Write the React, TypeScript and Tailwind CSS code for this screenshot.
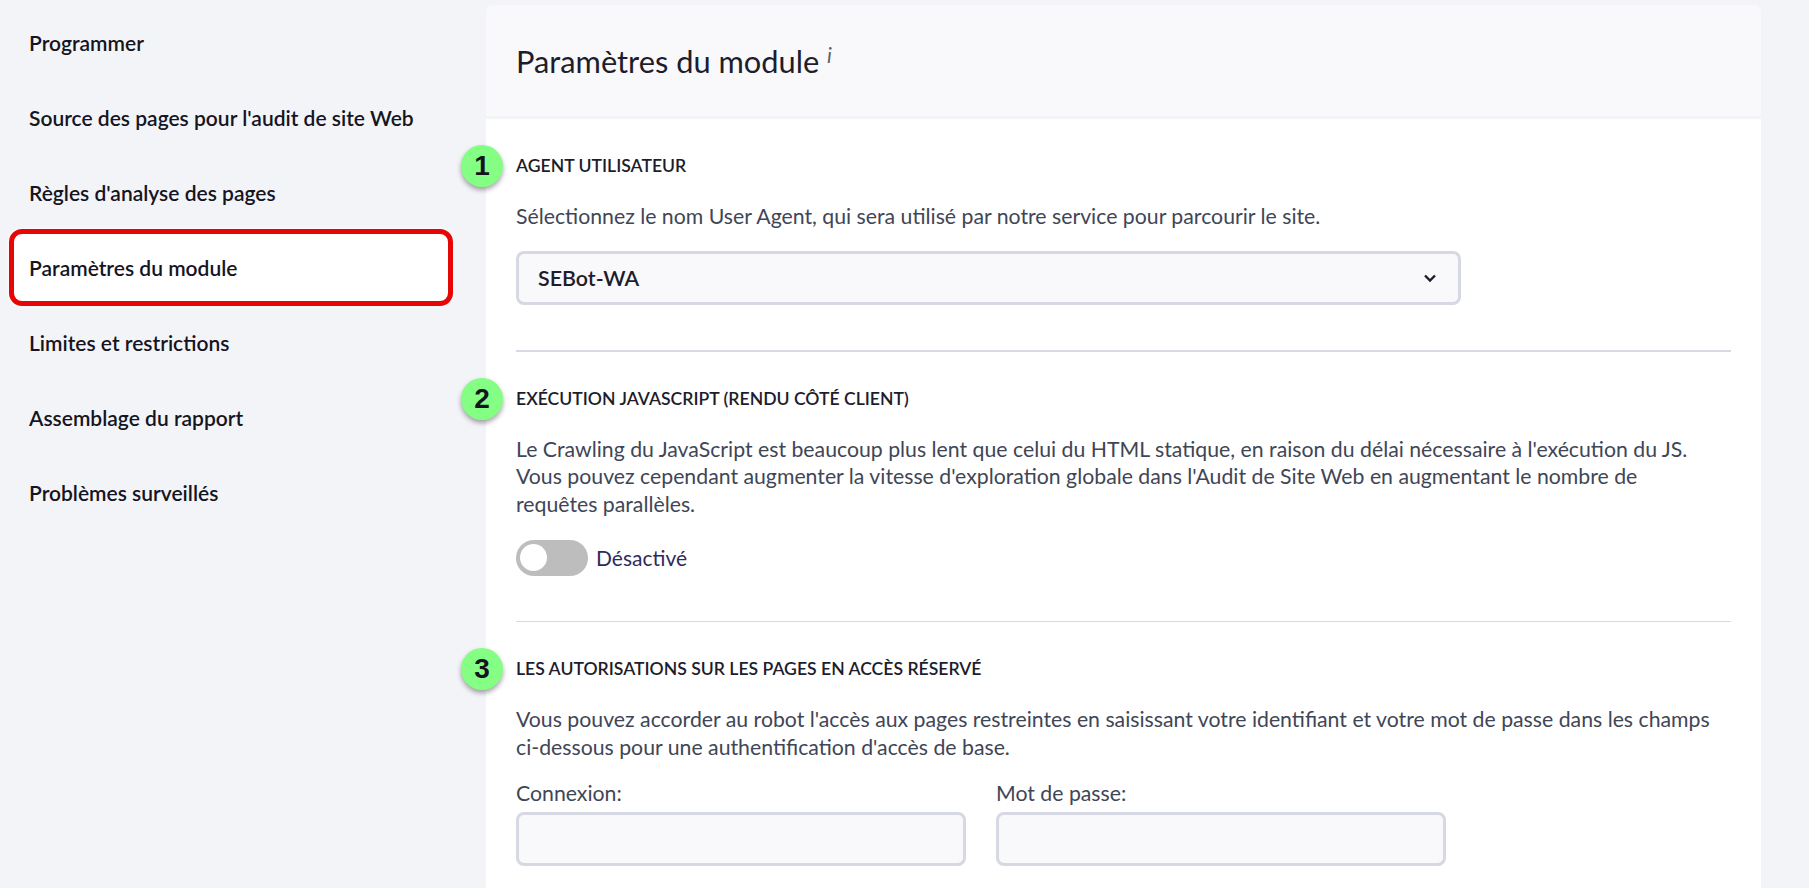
const navItems = [
  'Programmer',
  "Source des pages pour l'audit de site Web",
  "Règles d'analyse des pages",
  'Paramètres du module',
  'Limites et restrictions',
  'Assemblage du rapport',
  'Problèmes surveillés',
];

function Badge({ n }: { n: number }) {
  return (
    <div className="absolute left-[-55px] top-1/2 flex h-[42px] w-[42px] -translate-y-1/2 items-center justify-center rounded-full bg-[#84ff84] font-['Liberation_Sans',sans-serif] text-[28px] font-bold text-[#14141e] shadow-[0_3px_5px_rgba(0,0,0,0.35)]">
      {n}
    </div>
  );
}

function SectionTitle({ n, children }: { n: number; children: React.ReactNode }) {
  return (
    <h2 className="relative text-[17.6px] leading-[24px] font-semibold text-[#1d1d2b] uppercase">
      <Badge n={n} />
      {children}
    </h2>
  );
}

function Field({ label }: { label: string }) {
  return (
    <div className="w-[450px]">
      <label className="block text-[21.25px] leading-[27.7px] text-[#3f4656]">{label}</label>
      <input className="mt-[4px] h-[54px] w-full rounded-lg border-[3px] border-[#d6d8e3] bg-[#f9f9fc]" />
    </div>
  );
}

export default function App() {
  return (
    <div className="flex h-[888px] overflow-hidden bg-[#f3f4f8] font-['Lato',sans-serif] antialiased">
      <aside className="w-[486px] shrink-0 pt-[5px]">
        {navItems.map((item) =>
          item === 'Paramètres du module' ? (
            <div key={item} className="relative flex h-[75px] items-center pl-[29px] text-[21px] font-semibold text-[#15151f]">
              <div className="absolute top-[-1px] right-[33px] bottom-[-1px] left-[9px] rounded-[13px] border-[5px] border-[#e60606] bg-white shadow-[0_0_4px_#fff]" />
              <span className="relative">{item}</span>
            </div>
          ) : (
            <div key={item} className="flex h-[75px] items-center pl-[29px] text-[21px] font-semibold text-[#15151f]">
              {item}
            </div>
          ),
        )}
      </aside>

      <main className="mt-[5px] w-[1275px] shrink-0 rounded-t-lg bg-white">
        <header className="flex h-[114px] items-center rounded-t-lg border-b-[3px] border-[#f3f4f8] bg-[#f9f9fc] px-[30px] pt-[3px]">
          <h1 className="text-[30.8px] leading-none text-[#1d1d2b]">
            Paramètres du module <i className="relative -top-[10px] text-[21px] text-[#5a6070]">i</i>
          </h1>
        </header>

        <div className="px-[30px]">
          <section className="border-b-2 border-[#d8d9e5] pt-[35px] pb-[45px]">
            <SectionTitle n={1}>Agent utilisateur</SectionTitle>
            <p className="mt-[25px] text-[21.25px] leading-[27.7px] text-[#3f4656]">
              Sélectionnez le nom User Agent, qui sera utilisé par notre service pour parcourir le site.
            </p>
            <div className="mt-[20px] flex h-[54px] w-[945px] items-center justify-between rounded-lg border-[3px] border-[#d6d8e3] bg-[#f9f9fc] pr-[21px] pl-[19px] text-[21.4px] font-semibold text-[#1d1d2b]">
              SEBot-WA
              <svg width="14" height="10" viewBox="0 0 14 10" fill="none" stroke="#1d1d2b" strokeWidth="2.4">
                <path d="M2 2.5 7 7.5 12 2.5" />
              </svg>
            </div>
          </section>

          <section className="border-b border-[#d8d9e5] pt-[35px] pb-[45px]">
            <SectionTitle n={2}>Exécution JavaScript (rendu côté client)</SectionTitle>
            <p className="mt-[25px] text-[21.25px] leading-[27.7px] text-[#3f4656]">
              Le Crawling du JavaScript est beaucoup plus lent que celui du HTML statique, en raison du délai nécessaire à l'exécution du JS.
              <br />
              Vous pouvez cependant augmenter la vitesse d'exploration globale dans l'Audit de Site Web en augmentant le nombre de
              <br />
              requêtes parallèles.
            </p>
            <div className="mt-[21px] flex items-center gap-[8px]">
              <div className="flex h-[36px] w-[72px] items-center rounded-full bg-[#bdbdbd] pl-[4px]">
                <div className="h-[27px] w-[27px] rounded-full bg-white" />
              </div>
              <span className="text-[21px] text-[#2f2b5c]">Désactivé</span>
            </div>
          </section>

          <section className="pt-[35px]">
            <SectionTitle n={3}>Les autorisations sur les pages en accès réservé</SectionTitle>
            <p className="mt-[25px] text-[21.25px] leading-[27.7px] text-[#3f4656]">
              Vous pouvez accorder au robot l'accès aux pages restreintes en saisissant votre identifiant et votre mot de passe dans les champs
              <br />
              ci-dessous pour une authentification d'accès de base.
            </p>
            <div className="mt-[19px] flex gap-[30px]">
              <Field label="Connexion:" />
              <Field label="Mot de passe:" />
            </div>
          </section>
        </div>
      </main>
    </div>
  );
}
